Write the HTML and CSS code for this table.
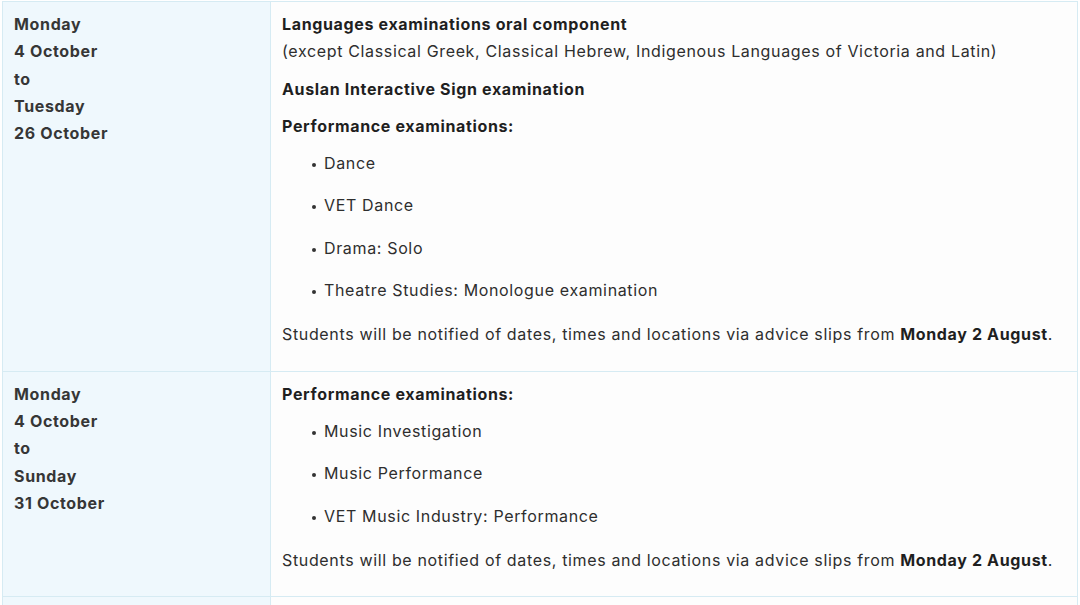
FILE: index.html
```html
<!DOCTYPE html>
<html>
<head>
<meta charset="utf-8">
<link rel="stylesheet" href="styles.css">
</head>
<body>
<table class="dates">
  <tr>
    <td class="when">
      <p>Monday<br>4 October<br>to<br>Tuesday<br>26 October</p>
    </td>
    <td class="what">
      <p><strong>Languages examinations oral component</strong><br>(except Classical Greek, Classical Hebrew, Indigenous Languages of Victoria and Latin)</p>
      <p><strong>Auslan Interactive Sign examination</strong></p>
      <p><strong>Performance examinations:</strong></p>
      <ul>
        <li>Dance</li>
        <li>VET Dance</li>
        <li>Drama: Solo</li>
        <li>Theatre Studies: Monologue examination</li>
      </ul>
      <p>Students will be notified of dates, times and locations via advice slips from <strong>Monday 2 August</strong>.</p>
    </td>
  </tr>
  <tr>
    <td class="when">
      <p>Monday<br>4 October<br>to<br>Sunday<br>31 October</p>
    </td>
    <td class="what">
      <p><strong>Performance examinations:</strong></p>
      <ul>
        <li>Music Investigation</li>
        <li>Music Performance</li>
        <li>VET Music Industry: Performance</li>
      </ul>
      <p>Students will be notified of dates, times and locations via advice slips from <strong>Monday 2 August</strong>.</p>
    </td>
  </tr>
  <tr class="next">
    <td class="when"></td>
    <td class="what"></td>
  </tr>
</table>
</body>
</html>
```
FILE: styles.css
```css
html, body {
  margin: 0;
  padding: 0;
  background: #ffffff;
}
body {
  padding: 1px 2px 0 2px;
  font-family: "Inter", "Open Sans", sans-serif;
  font-size: 16px;
  letter-spacing: 0.65px;
  line-height: 27.3px;
  color: #2e2e2e;
}
.dates {
  border-collapse: collapse;
  width: 1076px;
}
.dates td {
  border: 1px solid #d6ebf3;
  vertical-align: top;
}
.when {
  width: 245px;
  background: #eff8fd;
  padding: 9px 11px 0 11px;
  font-weight: 700;
  color: #363636;
}
.what {
  background: #fdfdfd;
  padding: 9px 11px 12px 11px;
}
.what p {
  margin: 0 0 10px 0;
}
.when p {
  margin: 0;
}
strong {
  font-weight: 700;
  color: #1f1f1f;
}
.what ul {
  margin: 1px 0 17px 0;
  padding: 0 0 0 42px;
  list-style: none;
}
.what li {
  position: relative;
  margin-bottom: 15px;
}
.what li::before {
  content: "";
  position: absolute;
  left: -12px;
  top: 13px;
  width: 4px;
  height: 4px;
  border-radius: 50%;
  background: #333;
}
.next td {
  height: 10px;
  padding: 0;
}
```
